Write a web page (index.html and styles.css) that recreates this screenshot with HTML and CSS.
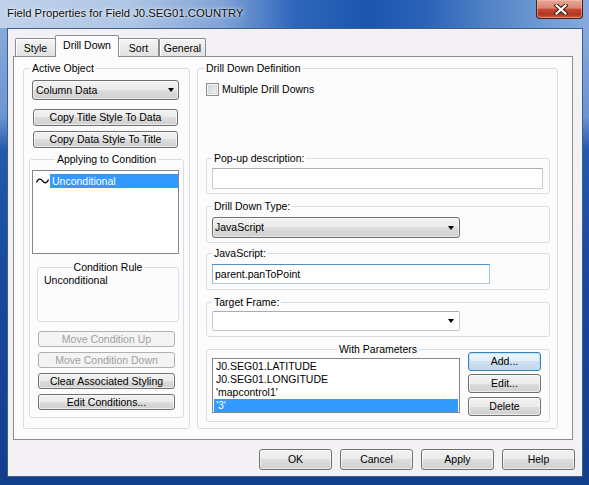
FILE: index.html
```html
<!DOCTYPE html>
<html>
<head>
<meta charset="utf-8">
<link rel="stylesheet" href="styles.css">
</head>
<body>
<div class="window">
  <div class="titlebar">
    <span class="title">Field Properties for Field J0.SEG01.COUNTRY</span>
    <div class="close">
      <svg width="14" height="11" viewBox="0 0 14 11">
        <path d="M2.5 1.5 L11.5 9.5 M11.5 1.5 L2.5 9.5" stroke="#3b1a12" stroke-width="4.2" stroke-linecap="square"/>
        <path d="M2.5 1.5 L11.5 9.5 M11.5 1.5 L2.5 9.5" stroke="#ffffff" stroke-width="2.2" stroke-linecap="square"/>
      </svg>
    </div>
  </div>
  <div class="client">
    <div class="tabs">
      <div class="tab t-style">Style</div>
      <div class="tab sel t-dd">Drill Down</div>
      <div class="tab t-sort">Sort</div>
      <div class="tab t-gen">General</div>
    </div>
    <div class="panel">
      <fieldset class="grp g-active">
        <legend class="lg-left">Active Object</legend>
        <div class="active-body">
          <div class="combo c-col"><span>Column Data</span><i class="arrow"></i></div>
          <button class="btn b-copy b-first">Copy Title Style To Data</button>
          <button class="btn b-copy">Copy Data Style To Title</button>
          <fieldset class="grp g-apply">
            <legend class="lg-center">Applying to Condition</legend>
            <div class="apply-body">
              <div class="listbox lb-cond">
                <div class="cond-row">
                  <span class="tilde"><svg width="15" height="8" viewBox="0 0 15 8"><path d="M1.5 5.5 C3 1.5 5.5 1.2 7.5 3.8 S12 6.8 13.5 2.5" fill="none" stroke="#000" stroke-width="1.3"/></svg></span>
                  <span class="hl">Unconditional</span>
                </div>
              </div>
              <fieldset class="grp g-rule">
                <legend class="lg-center">Condition Rule</legend>
                <div class="rule-body">Unconditional</div>
              </fieldset>
              <button class="btn b-cond b-cfirst" disabled>Move Condition Up</button>
              <button class="btn b-cond" disabled>Move Condition Down</button>
              <button class="btn b-cond">Clear Associated Styling</button>
              <button class="btn b-cond">Edit Conditions...</button>
            </div>
          </fieldset>
        </div>
      </fieldset>
      <fieldset class="grp g-def">
        <legend class="lg-left">Drill Down Definition</legend>
        <div class="def-body">
          <div class="check-row"><span class="checkbox"></span><span class="check-label">Multiple Drill Downs</span></div>
          <fieldset class="grp sub g-popup">
            <legend class="lg-sub">Pop-up description:</legend>
            <div class="sub-body sb-popup"><div class="textbox tb-popup"></div></div>
          </fieldset>
          <fieldset class="grp sub g-type">
            <legend class="lg-sub">Drill Down Type:</legend>
            <div class="sub-body sb-type"><div class="combo c-type"><span>JavaScript</span><i class="arrow"></i></div></div>
          </fieldset>
          <fieldset class="grp sub g-js">
            <legend class="lg-sub">JavaScript:</legend>
            <div class="sub-body sb-js"><div class="textbox tb-js">parent.panToPoint</div></div>
          </fieldset>
          <fieldset class="grp sub g-target">
            <legend class="lg-sub">Target Frame:</legend>
            <div class="sub-body sb-target"><div class="editcombo"><span></span><i class="arrow"></i></div></div>
          </fieldset>
          <fieldset class="grp sub g-params">
            <legend class="lg-center">With Parameters</legend>
            <div class="params-body">
              <div class="listbox lb-params">
                <div class="item">J0.SEG01.LATITUDE</div>
                <div class="item">J0.SEG01.LONGITUDE</div>
                <div class="item">'mapcontrol1'</div>
                <div class="item selected">'3'</div>
              </div>
              <div class="param-btns">
                <button class="btn b-param b-default">Add...</button>
                <button class="btn b-param">Edit...</button>
                <button class="btn b-param b-del">Delete</button>
              </div>
            </div>
          </fieldset>
        </div>
      </fieldset>
    </div>
    <div class="footer">
      <button class="btn b-foot">OK</button>
      <button class="btn b-foot">Cancel</button>
      <button class="btn b-foot">Apply</button>
      <button class="btn b-foot">Help</button>
    </div>
  </div>
</div>
</body>
</html>
```
FILE: styles.css
```css
html, body {
  margin: 0;
  padding: 0;
}
body {
  font-family: "Liberation Sans", Arial, sans-serif;
  font-size: 10.5px;
  color: #000;
  background: #fff;
}
.window {
  width: 589px;
  height: 485px;
  display: flex;
  flex-direction: column;
  overflow: hidden;
  background: linear-gradient(to bottom, #8fb0de 0%, #6a96d2 24%, #2459ab 31%, #17489a 60%, #123f8c 100%);
}
.titlebar {
  height: 28px;
  flex: none;
  display: flex;
  align-items: flex-start;
  background: linear-gradient(to right, #c0d2ea 0%, #afc6e6 22%, #7fa2d6 38%, #2e66ba 50%, #1c55ae 62%, #2a62b7 72%, #4f80c6 82%, #6f9ad3 92%, #86aade 100%);
}
.title {
  font-size: 11.3px;
  line-height: 14px;
  margin: 6px 0 0 7px;
  color: #0b0b0b;
  text-shadow: 0 0 5px rgba(255,255,255,0.9), 0 0 2px rgba(255,255,255,0.9);
  white-space: nowrap;
}
.close {
  margin-left: auto;
  margin-right: 6px;
  width: 47px;
  height: 19px;
  box-sizing: border-box;
  border: 1px solid #4a1f16;
  border-top: none;
  border-radius: 0 0 4px 4px;
  background: linear-gradient(to bottom, #e9a897 0%, #d98371 45%, #c44b33 52%, #b5361f 80%, #cc5f43 100%);
  box-shadow: inset 0 0 0 1px rgba(255,200,190,0.45);
  display: flex;
  align-items: center;
  justify-content: center;
}
.close svg { display: block; margin-left: 2px; }

.client {
  flex: none;
  width: 576px;
  height: 449px;
  box-sizing: border-box;
  margin-left: 7px;
  border: 1px solid #3f5f88;
  background: #f3f1f4;
  padding: 6px 0 0 5px;
  display: flex;
  flex-direction: column;
}

/* tabs */
.tabs {
  display: flex;
  align-items: flex-end;
  height: 21px;
  margin-left: 2px;
  position: relative;
  z-index: 2;
}
.tab {
  box-sizing: border-box;
  height: 18px;
  border: 1px solid #898c95;
  border-bottom: none;
  border-radius: 2px 2px 0 0;
  background: linear-gradient(to bottom, #f5f5f5 0%, #ebebeb 50%, #e1e1e1 100%);
  box-shadow: inset 1px 1px 0 #fff;
  display: flex;
  align-items: center;
  justify-content: center;
  line-height: 13px;
  padding-top: 1px;
}
.tab.sel {
  height: 22px;
  margin-bottom: -1px;
  background: #fcfcfc;
  box-shadow: none;
  padding-top: 0;
  padding-bottom: 2px;
}
.t-style { width: 41px; }
.t-dd { width: 64px; margin-left: -1px; }
.t-sort { width: 41px; margin-left: -1px; }
.t-gen { width: 47px; margin-left: 0; }

.panel {
  width: 560px;
  height: 384px;
  box-sizing: border-box;
  border: 1px solid #898c95;
  background: #fcfcfc;
  padding: 5px 14px 10px 9px;
  display: flex;
  gap: 7px;
}

/* group boxes */
.grp {
  margin: 0;
  padding: 0;
  min-width: 0;
  border: 1px solid #d5dfe5;
  border-radius: 3px;
  box-sizing: border-box;
}
legend {
  padding: 0 2px;
  line-height: 13px;
  font-size: 10.5px;
}
.lg-left { margin-left: 6px; }
.lg-sub { margin-left: 5px; }
.lg-center { margin-left: auto; margin-right: auto; }

.g-active { width: 167px; height: 367px; }
.active-body { padding: 5px 0 0 8px; }

.combo {
  box-sizing: border-box;
  height: 20px;
  border: 1px solid #707070;
  border-radius: 3px;
  background: linear-gradient(to bottom, #f2f2f2 0%, #ebebeb 50%, #dddddd 50%, #cfcfcf 100%);
  box-shadow: inset 0 0 0 1px rgba(255,255,255,0.55);
  display: flex;
  align-items: center;
  padding: 0 4px 0 3px;
  line-height: 13px;
}
.combo span, .editcombo span { flex: 1; }
.arrow {
  display: block;
  width: 0;
  height: 0;
  border-left: 3.5px solid transparent;
  border-right: 3.5px solid transparent;
  border-top: 4px solid #000;
}
.c-col { width: 147px; }
.c-type { width: 248px; height: 21px; padding-left: 2px; padding-right: 5px; }

.btn {
  display: flex;
  align-items: center;
  justify-content: center;
  box-sizing: border-box;
  padding: 0;
  margin: 0;
  font-family: inherit;
  font-size: 10.5px;
  line-height: 13px;
  color: #000;
  border: 1px solid #707070;
  border-radius: 3px;
  background: linear-gradient(to bottom, #f2f2f2 0%, #ebebeb 50%, #dddddd 50%, #cfcfcf 100%);
  box-shadow: inset 0 0 0 1px rgba(255,255,255,0.6);
  white-space: nowrap;
}
.btn:disabled {
  color: #a0a0a0;
  border-color: #adb2b5;
  background: #f4f4f4;
  box-shadow: none;
}
.b-copy { width: 145px; height: 17px; margin: 5px 0 0 1px; }
.b-copy.b-first { margin-top: 9px; }

.g-apply { width: 155px; height: 265px; margin: 5px 0 0 -3px; }
.apply-body { padding: 4px 0 0 2px; }

.listbox {
  box-sizing: border-box;
  border: 1px solid #828790;
  background: #fff;
}
.lb-cond { width: 147px; height: 84px; padding-top: 3px; }
.cond-row { display: flex; height: 14px; }
.tilde { width: 17px; display: flex; align-items: center; justify-content: center; padding-left: 1px; box-sizing: border-box; }
.tilde svg { display: block; }
.hl {
  flex: 1;
  background: #3399ff;
  color: #fff;
  padding-left: 2px;
  line-height: 14px;
}

.g-rule { width: 142px; height: 61px; margin: 7px 0 0 5px; }
.rule-body { padding-left: 6px; line-height: 13px; }

.b-cond { width: 137px; height: 16px; margin: 5px 0 0 6px; }
.b-cond.b-cfirst { margin-top: 9px; }

/* right */
.g-def { width: 361px; height: 367px; }
.def-body { padding: 8px 0 0 8px; }
.check-row { display: flex; align-items: center; height: 13px; }
.checkbox {
  width: 13px;
  height: 13px;
  box-sizing: border-box;
  border: 1px solid #8e8f8f;
  background: linear-gradient(135deg, #cbcfd5 0%, #e6e8ea 60%, #f6f6f6 100%);
  box-shadow: inset 0 0 0 1px #f4f4f4, inset 0 0 0 2px #d9dcdf;
}
.check-label { margin-left: 3px; line-height: 13px; }

.sub { width: 344px; }
.sub-body { padding-left: 5px; }
.g-popup { margin-top: 56px; }
.sb-popup { padding-top: 3px; padding-bottom: 4px; }
.g-type { margin-top: 6px; }
.sb-type { padding-top: 4px; padding-bottom: 4px; }
.g-js { margin-top: 4px; }
.sb-js { padding-top: 4px; padding-bottom: 5px; }
.g-target { margin-top: 6px; }
.sb-target { padding-top: 2px; padding-bottom: 5px; }
.g-params { margin-top: 6px; }

.textbox {
  box-sizing: border-box;
  background: #fff;
  border: 1px solid #c9ccd2;
  border-top-color: #abadb3;
  line-height: 13px;
  padding: 0 2px;
  display: flex;
  align-items: center;
}
.tb-popup { width: 331px; height: 21px; }
.tb-js {
  width: 278px;
  height: 20px;
  border-color: #a9cbe5;
  border-top-color: #4e8fc6;
  border-left-color: #8db8dc;
  border-right-color: #9cc2e0;
  padding-left: 2px;
}

.editcombo {
  box-sizing: border-box;
  width: 248px;
  height: 20px;
  background: #fff;
  border: 1px solid #c4c8ce;
  border-top-color: #abadb3;
  border-radius: 2px;
  display: flex;
  align-items: center;
  padding: 0 5px 0 3px;
}

.params-body {
  display: flex;
  align-items: flex-start;
  padding: 0 0 5px 5px;
}
.lb-params {
  width: 248px;
  height: 55px;
  margin-top: 2px;
  padding: 1px;
}
.item {
  height: 13px;
  line-height: 13px;
  padding-left: 2px;
  white-space: nowrap;
}
.item.selected { background: #3399ff; color: #fff; }
.param-btns {
  margin: -4px 0 0 8px;
  display: flex;
  flex-direction: column;
}
.b-param { width: 73px; height: 19px; margin-top: 3px; }
.b-param:first-child { margin-top: 0; }
.b-param.b-del { margin-top: 4px; }
.b-default {
  border-color: #3c7fb1;
  background: linear-gradient(to bottom, #eef5fb 0%, #e3eef8 50%, #cfe0f0 50%, #c2d7ec 100%);
  box-shadow: inset 0 0 0 1px rgba(180,225,250,0.9);
}

.footer {
  display: flex;
  justify-content: flex-end;
  gap: 8px;
  margin-top: 9px;
  margin-right: 7px;
}
.b-foot { width: 73px; height: 21px; }
```
